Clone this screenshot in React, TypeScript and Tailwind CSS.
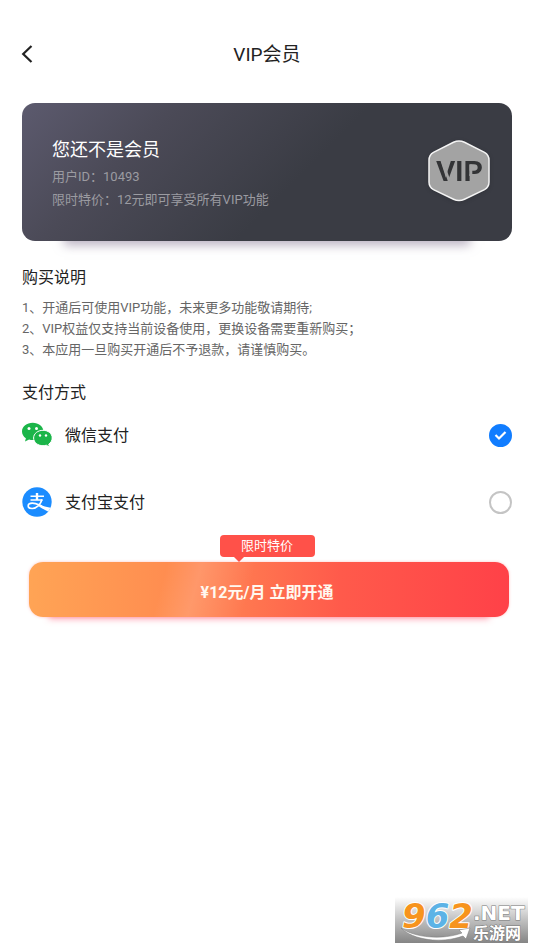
import { useState } from "react";

const notes = [
  "1、开通后可使用VIP功能，未来更多功能敬请期待;",
  "2、VIP权益仅支持当前设备使用，更换设备需要重新购买；",
  "3、本应用一旦购买开通后不予退款，请谨慎购买。",
];

function WechatIcon() {
  return (
    <svg width="30" height="26" viewBox="0 0 30 26" aria-hidden="true">
      <path
        fill="#1bb549"
        d="M10.700.8C4.800.8 0 4.600 0 9.400c0 2.700 1.500 5.200 3.900 6.800L3 19.600l4.100-2.100c1.400.4 2.900.6 4.400.5C17 17.600 21.400 14 21.400 9.400 21.400 4.600 16.600.8 10.700.8z"
      />
      <path
        fill="#1bb549"
        stroke="#fff"
        strokeWidth="1"
        d="M21 8.300c-5.200 0-9.400 3.300-9.400 7.700s4.200 7.700 9.400 7.700c1.200 0 2.300-.2 3.300-.5l3.200 1.900-.8-2.900c2-1.400 3.500-3.600 3.500-6.200 0-4.400-4-7.700-9.200-7.700z"
      />
      <g fill="#fff">
        <circle cx="7" cy="6.500" r="1.500" />
        <circle cx="14.500" cy="6.500" r="1.500" />
        <circle cx="18" cy="13.500" r="1.200" />
        <circle cx="24" cy="13.500" r="1.200" />
      </g>
    </svg>
  );
}

function AlipayIcon() {
  return (
    <svg width="30" height="30" viewBox="0 0 30 30" aria-hidden="true">
      <defs>
        <clipPath id="alipay-disc">
          <circle cx="15" cy="15" r="14.700" />
        </clipPath>
      </defs>
      <circle cx="15" cy="15" r="14.700" fill="#1b8cff" />
      <g clipPath="url(#alipay-disc)" fill="none" stroke="#fff">
        <path d="M8.500 9.200H22M8.500 13H20.500" strokeWidth="1.600" />
        <path d="M15 6V13" strokeWidth="2.400" />
        <path d="M20 12.500C18.500 17.500 14.500 21.500 10.200 21.500C7.500 21.500 6.200 20.400 6.200 19C6.200 17.300 7.900 16.200 10.300 16.200C14 16.200 17 18 20 19.200" strokeWidth="1.700" />
        <path d="M17 17.200C21 19 24.500 20 30 21L28 25.500C23.500 23.500 19.500 21.200 16 18.800Z" fill="#fff" stroke="none" />
      </g>
    </svg>
  );
}

function VipBadge() {
  return (
    <svg width="64" height="64" viewBox="0 1 64 64" className="shrink-0 drop-shadow-sm" role="img" aria-label="VIP">
      <path
        d="M26.500 3.300Q32 .8 37.500 3.300L57.500 13.300Q62 16 62 21V43Q62 48 57.500 50.700L37.500 60.200Q32 62.700 26.500 60.200L6.500 50.700Q2 48 2 43V21Q2 16 6.500 13.300Z"
        fill="#a3a3a3"
        stroke="#f4f4f4"
        strokeWidth="1.500"
      />
      <text x="9" y="42" fontSize="29" fontWeight="700" fill="#333436" className="font-['Liberation_Sans']">
        VIP
      </text>
      <path d="M15 21L22.500 43" stroke="#a3a3a3" strokeWidth="2.600" />
      <path d="M43.800 25.500V37" stroke="#a3a3a3" strokeWidth="3" />
    </svg>
  );
}

function SiteMark() {
  return (
    <svg width="133" height="46" viewBox="0 0 133 46" role="img" aria-label="962.NET 乐游网">
      <defs>
        <linearGradient id="mark-bg" x1="0" y1="0" x2="0" y2="1">
          <stop offset="0" stopColor="#fff" />
          <stop offset="0.500" stopColor="#c0c0c0" />
          <stop offset="1" stopColor="#858585" />
        </linearGradient>
      </defs>
      <rect width="133" height="46" fill="url(#mark-bg)" />
      <g
        className="font-['DejaVu_Sans']"
        fontWeight="700"
        fontSize="34"
        fontStyle="italic"
        stroke="#fff"
        strokeWidth="2"
        paintOrder="stroke"
        strokeLinejoin="round"
      >
        <text x="7" y="31">
          <tspan fill="#f7941d">9</tspan>
          <tspan fill="#5cb3e6">6</tspan>
          <tspan fill="#f7941d">2</tspan>
        </text>
      </g>
      <path
        d="M6 31C20 41 48 43 67 36L64 33L75 31L71 42L68 39C46 47 18 43 6 31Z"
        fill="#fff"
        stroke="#777"
        strokeWidth="0.500"
      />
      <g fill="#fff" stroke="#777" strokeWidth="1" paintOrder="stroke" fontWeight="700">
        <text x="78" y="23" fontSize="20" className="font-['DejaVu_Sans']">
          .NET
        </text>
        <text x="78" y="42" fontSize="16" className="font-['Liberation_Sans','Noto_Sans_CJK_SC',sans-serif]">
          乐游网
        </text>
      </g>
    </svg>
  );
}

const methods = [
  { id: "wechat", label: "微信支付", icon: <WechatIcon /> },
  { id: "alipay", label: "支付宝支付", icon: <AlipayIcon /> },
];

export default function App() {
  const [method, setMethod] = useState("wechat");

  return (
    <div className="min-h-screen flex flex-col bg-white pb-1.5 text-[#222] font-[Roboto,'Noto_Sans_CJK_SC',sans-serif]">
      <header className="grid grid-cols-[40px_1fr_40px] items-center px-[14px] pt-[34px]">
        <button type="button" aria-label="返回" className="size-10 flex items-center pl-[7px]">
          <svg width="12" height="18" viewBox="0 0 12 18" fill="none" stroke="#222" strokeWidth="2.200">
            <path d="M10.500 1L2.200 9L10.500 17" />
          </svg>
        </button>
        <h1 className="pt-0.5 text-center text-[19px] leading-7">VIP会员</h1>
      </header>

      <main className="px-[22px] pt-[29px]">
        <section className="flex items-center justify-between rounded-[13px] bg-[linear-gradient(135deg,#5c5a6e_0%,#4b4a57_25%,#3a3c44_56%,#3a3c44_100%)] py-[30px] pl-[30px] pr-[21px] shadow-[0_46px_10px_-42px_#8a7c9899]">
          <div className="pt-0.5">
            <h2 className="text-lg leading-[30px] text-white">您还不是会员</h2>
            <p className="text-[13px] leading-[23px] text-[#9b9ba1]">用户ID：10493</p>
            <p className="text-[13px] leading-[23px] text-[#9b9ba1]">限时特价：12元即可享受所有VIP功能</p>
          </div>
          <VipBadge />
        </section>

        <section className="mt-[25px]">
          <h2 className="text-base leading-6">购买说明</h2>
          <ul className="mt-[7px] text-[13px] leading-[21px] text-[#666]">
            {notes.map((note) => (
              <li key={note}>{note}</li>
            ))}
          </ul>
        </section>

        <fieldset className="mt-[21px]">
          <legend className="text-base leading-6">支付方式</legend>
          <div className="mt-[15px] flex flex-col gap-[37px]">
            {methods.map((item) => (
              <label key={item.id} className="h-[30px] flex items-center text-base">
                {item.icon}
                <span className="ml-[13px] flex-1 pt-0.5">{item.label}</span>
                <span className="relative size-[23px]">
                  <input
                    type="radio"
                    name="method"
                    value={item.id}
                    checked={method === item.id}
                    onChange={() => setMethod(item.id)}
                    className="peer block size-full appearance-none rounded-full border-2 border-[#c4c4c4] checked:border-[#117dff] checked:bg-[#117dff]"
                  />
                  <svg
                    viewBox="0 0 23 23"
                    fill="none"
                    stroke="#fff"
                    strokeWidth="2.200"
                    className="pointer-events-none absolute inset-0 hidden peer-checked:block"
                  >
                    <path d="M6.500 11L10 14.500L16.500 8" />
                  </svg>
                </span>
              </label>
            ))}
          </div>
        </fieldset>

        <div className="mt-[18px] flex flex-col">
          <div className="relative mb-[5px] w-[95px] self-center rounded-[4px] bg-[#ff5149] text-center text-[13px] leading-[22px] text-white">
            限时特价
            <svg width="10" height="5" viewBox="0 0 10 5" className="absolute left-[14px] top-full">
              <path d="M0 0H10L5 5Z" fill="#ff5149" />
            </svg>
          </div>
          <button
            type="button"
            className="ml-[7px] mr-[3px] h-[55px] rounded-[14px] bg-[linear-gradient(105deg,transparent_28%,#ffffff26_35%,transparent_46%),linear-gradient(90deg,#ffa455_0%,#ff8c50_30%,#ff7950_44%,#ff5a4b_65%,#ff4148_100%)] pr-1 pt-1.5 text-base font-bold text-[#fff8f0] shadow-[0_0_3px_#ff6a6a66,0_22px_6px_-20px_#ff4d6d80]"
          >
            ¥12元/月 立即开通
          </button>
        </div>
      </main>

      <footer className="mt-auto flex justify-end pr-1.5">
        <SiteMark />
      </footer>
    </div>
  );
}
